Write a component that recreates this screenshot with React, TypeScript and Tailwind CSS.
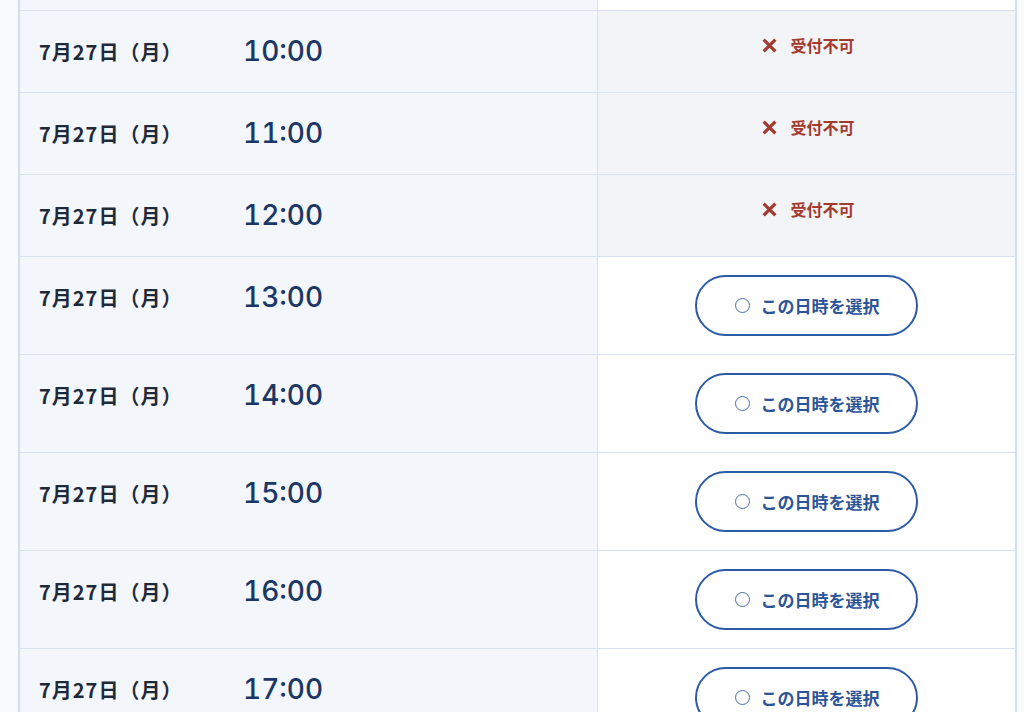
import React from "react";

const rows: { time: string; ok: boolean }[] = [
  { time: "10:00", ok: false },
  { time: "11:00", ok: false },
  { time: "12:00", ok: false },
  { time: "13:00", ok: true },
  { time: "14:00", ok: true },
  { time: "15:00", ok: true },
  { time: "16:00", ok: true },
  { time: "17:00", ok: true },
];

const font = { fontFamily: '"Noto Sans CJK JP", "Noto Sans", sans-serif' };

export default function App() {
  return (
    <div
      className="w-[1024px] h-[712px] overflow-hidden bg-[#f9fafc] pl-[18px] pr-[7px]"
      style={font}
    >
      <div className="border-l-2 border-r-2 border-[#d3deea] bg-white">
        <div className="grid grid-cols-[578px_1fr] h-[11px] border-b border-[#d8e2ee]">
          <div className="bg-[#f3f6fb] border-r border-[#d8e2ee]" />
          <div className="bg-white" />
        </div>
        {rows.map((r) => (
          <div
            key={r.time}
            className="grid grid-cols-[578px_1fr] border-b border-[#d8e2ee]"
          >
            <div className="bg-[#f3f6fb] border-r border-[#d8e2ee] flex items-start pl-[19px] pt-[24px]">
              <span className="text-[20px] font-bold text-[#1e2a3a] w-[204px] mt-[2px] tracking-[1px]">
                7月27日（月）
              </span>
              <span className="font-['Inter',sans-serif] text-[28px] font-medium tabular-nums text-[#1b3765] leading-[40px] -mt-[4px]">
                {r.time}
              </span>
            </div>
            {r.ok ? (
              <div className="bg-white flex justify-center pt-[18px] pb-[18px] pr-[1px]">
                <button className="w-[223px] h-[61px] rounded-full border-2 border-[#2c5ba6] bg-white flex items-center justify-center gap-[11px] pl-[2px]">
                  <span className="w-[15px] h-[15px] rounded-full border border-[#4a6fae]" />
                  <span className="text-[17px] font-bold text-[#2c5597]">
                    この日時を選択
                  </span>
                </button>
              </div>
            ) : (
              <div className="bg-[#f3f4f7] h-[81px] flex justify-center items-start pt-[22px] pr-[1px]">
                <div className="flex items-center gap-[12px] pl-[4px]">
                  <svg width="17" height="17" viewBox="0 0 16 16">
                    <path
                      d="M2.5 2.5 L13.5 13.5 M13.5 2.5 L2.5 13.5"
                      stroke="#a33a2e"
                      strokeWidth="3"
                      strokeLinecap="butt"
                    />
                  </svg>
                  <span className="text-[16px] font-bold text-[#a33a2e]">
                    受付不可
                  </span>
                </div>
              </div>
            )}
          </div>
        ))}
      </div>
    </div>
  );
}
